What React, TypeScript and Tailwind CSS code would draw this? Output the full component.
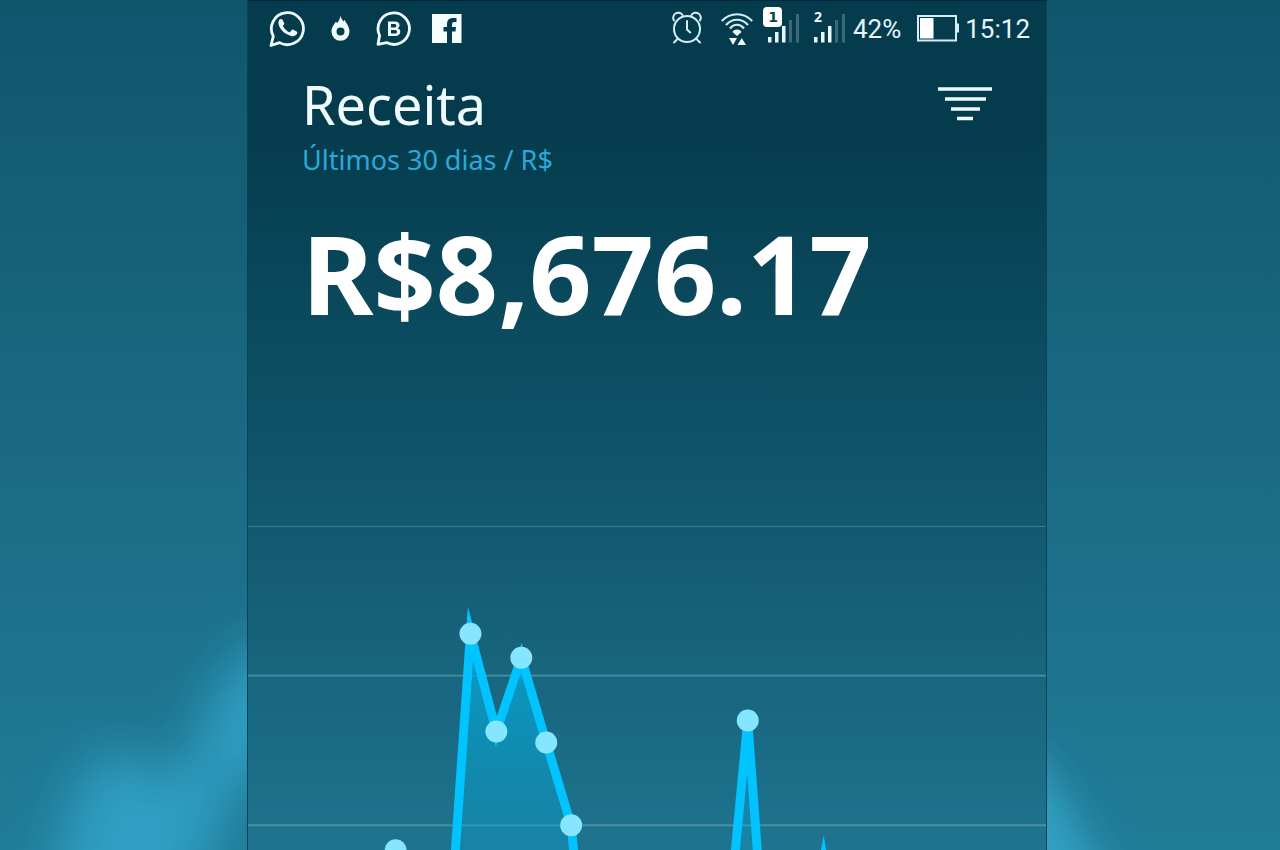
type Point = [number, number];

// Daily revenue, in chart units (800 wide, gridlines every 150)
const POINTS: Point[] = [
  [-3, 620],
  [22, 560],
  [48, 600],
  [73, 540],
  [98, 590],
  [123, 624],
  [148, 325],
  [173, 634],
  [198, 468],
  [223, 108],
  [249, 206],
  [274, 132],
  [299, 217],
  [324, 300],
  [350, 566],
  [375, 590],
  [400, 560],
  [425, 600],
  [450, 610],
  [476, 457],
  [501, 195],
  [526, 535],
  [551, 481],
  [577, 336],
  [602, 481],
  [627, 560],
  [803, 600],
];

function WhatsAppIcon() {
  return (
    <svg width="38" height="56" viewBox="0 0 38 56" aria-label="WhatsApp" fill="none">
      <path
        d="M2 44.500 4.300 35.200A16 16 0 1 1 10.600 41.600Z"
        stroke="#eefbff"
        strokeWidth="2.800"
        strokeLinejoin="round"
      />
      <path
        d="M10.500 18.500c1-.9 2.600-.8 3.200.4l1.500 3.400c.4.900-.8 2-1.400 2.700 1.600 3 3.900 5.100 6.800 6.400l2.200-2.400c.5-.5 1-.5 1.500-.2l3.300 1.700c1 .5.800 1.700.2 2.600-1.300 2-3.600 2.400-5.700 1.800-6.400-1.800-11-6-12.400-11.400-.5-2-.2-3.900.8-5Z"
        fill="#eefbff"
      />
    </svg>
  );
}

function FlameIcon() {
  return (
    <svg width="20" height="56" viewBox="0 0 20 56" aria-label="Hotmart" fill="none">
      <path
        fillRule="evenodd"
        d="M9.200 14.500c.3 2.500 2.600 4.200 3.300 6l1.200-1.700c1 3.200 4.800 6.200 4.800 12a9 9 0 0 1-18 0c0-4.600 2.600-7.200 4.400-10l1.300 1.200c1.800-2.200 3-4.600 3-7.500ZM9.500 26.500a4 4 0 1 0 0 8 4 4 0 0 0 0-8Z"
        fill="#eefbff"
      />
    </svg>
  );
}

function BusinessIcon() {
  return (
    <svg width="36" height="56" viewBox="0 0 36 56" aria-label="WhatsApp Business" fill="none">
      <path
        d="M2 43.300 3.600 34.500A15.700 15.700 0 1 1 10.500 41.600Z"
        stroke="#eefbff"
        strokeWidth="2.800"
        strokeLinejoin="round"
      />
      <path
        fillRule="evenodd"
        d="M12 20.500h6.800c3 0 4.700 1.300 4.700 3.700 0 1.500-.8 2.600-2.100 3.100 1.800.4 2.900 1.700 2.900 3.500 0 2.600-1.900 4.200-5.100 4.200h-7.200ZM15 23v3.500h3.200c1.500 0 2.200-.6 2.200-1.800 0-1.100-.7-1.700-2.200-1.700ZM15 28.900v3.700h3.600c1.600 0 2.400-.6 2.400-1.900 0-1.200-.8-1.800-2.400-1.800Z"
        fill="#eefbff"
      />
    </svg>
  );
}

function FacebookIcon() {
  return (
    <svg width="30" height="56" viewBox="0 0 30 56" aria-label="Facebook">
      <path
        fillRule="evenodd"
        d="M0 13H29.500V42H20V30.500H23.500L24 26H20V23.500C20 21.800 20.700 21 22.500 21H24.500V17H21C17 17 15 19.300 15 23V26H11.500V30.500H15V42H0Z"
        fill="#f4fdff"
      />
    </svg>
  );
}

function AlarmIcon() {
  return (
    <svg
      width="32"
      height="56"
      viewBox="0 0 32 56"
      aria-label="Alarme"
      fill="none"
      stroke="#d5eef5"
      strokeWidth="2"
      strokeLinecap="round"
    >
      <circle cx="16" cy="28" r="13" />
      <path d="M16 20v8.500l3.200 3M6.500 38 3 41.500M25.500 38l3.500 3.500" />
      <path d="M3 19.500A5 5 0 1 1 11.500 14M29 19.500A5 5 0 1 0 20.500 14" />
    </svg>
  );
}

function WifiIcon() {
  return (
    <svg width="32" height="56" viewBox="0 0 32 56" aria-label="Wi-Fi" fill="none">
      <g stroke="#d5eef5" strokeWidth="2.200">
        <path d="M.8 20C9.500 11 22.500 11 31.200 20" />
        <path d="M5 24C11 17 21 17 27 24" />
        <path d="M9 27.500C13 22.500 19 22.500 23 27.500" />
      </g>
      <path
        d="M11.500 31C13.500 27.800 18.500 27.800 20.500 31L16 35ZM8 37h8L12 44ZM16.500 44h8.500L20.700 37Z"
        fill="#eefbff"
      />
    </svg>
  );
}

function SignalBars({ x }: { x: number }) {
  return (
    <g>
      <path
        d={`M${x} 36h3.500v5.500h-3.500zM${x + 7} 31h3.500v10.500h-3.500zM${x + 14} 25h3.500v16.500h-3.500z`}
        fill="#e6f8fc"
      />
      <path d={`M${x + 21} 19h3v22.500h-3zM${x + 28} 13h3v28.500h-3z`} fill="#3b6877" />
    </g>
  );
}

function SignalOneIcon() {
  return (
    <svg width="37" height="56" viewBox="0 0 37 56" aria-label="Sinal do chip 1">
      <rect x="0" y="6" width="19" height="20" rx="4" fill="#ffffff" />
      <text
        x="10"
        y="21"
        textAnchor="middle"
        className="font-['DejaVu_Sans',sans-serif] text-[14px] font-bold"
        fill="#0b4252"
      >
        1
      </text>
      <SignalBars x={5} />
    </svg>
  );
}

function SignalTwoIcon() {
  return (
    <svg width="32" height="56" viewBox="0 0 32 56" aria-label="Sinal do chip 2">
      <text
        x="4"
        y="21"
        textAnchor="middle"
        className="font-['Noto_Sans',sans-serif] text-[14px] font-bold"
        fill="#e6f8fc"
      >
        2
      </text>
      <SignalBars x={0} />
    </svg>
  );
}

function BatteryIcon() {
  return (
    <svg width="42" height="56" viewBox="0 0 42 56" aria-label="Bateria">
      <rect x="1" y="15" width="38" height="24.500" fill="none" stroke="#d5eef5" strokeWidth="2" />
      <path d="M3 17h13.500v20.500H3z" fill="#ffffff" />
      <path d="M39.500 22.500H42v9h-2.500z" fill="#d5eef5" />
    </svg>
  );
}

function StatusBar() {
  return (
    <div className="flex h-14 items-center justify-between pr-4 pl-[21px] font-[Roboto,sans-serif] text-[26px] text-[#e6f6fa]">
      <div className="flex items-center">
        <WhatsAppIcon />
        <div className="ml-6">
          <FlameIcon />
        </div>
        <div className="ml-[25px]">
          <BusinessIcon />
        </div>
        <div className="ml-5">
          <FacebookIcon />
        </div>
      </div>
      <div className="flex items-center">
        <AlarmIcon />
        <div className="ml-[18px]">
          <WifiIcon />
        </div>
        <div className="ml-2.5">
          <SignalOneIcon />
        </div>
        <div className="ml-3.5">
          <SignalTwoIcon />
        </div>
        <span className="ml-[7px]">42%</span>
        <div className="mx-1.5 pl-2.5">
          <BatteryIcon />
        </div>
        <span>15:12</span>
      </div>
    </div>
  );
}

function RevenueChart() {
  const line = POINTS.map(([x, y]) => `${x},${y}`).join(" ");

  return (
    <svg
      viewBox="0 0 800 325"
      className="block w-full overflow-hidden"
      role="img"
      aria-label="Receita por dia"
    >
      <defs>
        <linearGradient id="area" gradientUnits="userSpaceOnUse" x1="0" y1="100" x2="0" y2="420">
          <stop offset="0" stopColor="#00afe0" stopOpacity="0.8" />
          <stop offset="1" stopColor="#0fa0cc" stopOpacity="0.1" />
        </linearGradient>
      </defs>
      <path d="M0 .5H800" stroke="#3f7b8f" strokeWidth="1" />
      <path d="M0 150H800M0 300H800" stroke="#4a8ea2" strokeWidth="2" />
      <polygon points={`-3,700 ${line} 803,700`} fill="url(#area)" />
      <polyline
        points={line}
        fill="none"
        stroke="#00c3ff"
        strokeWidth="9"
        strokeMiterlimit="10"
      />
      {POINTS.map(([x, y]) => (
        <circle key={x} cx={x} cy={y} r="11" fill="#86e5ff" />
      ))}
    </svg>
  );
}

export default function App() {
  return (
    <div className="grid min-h-screen grid-cols-[247fr_800fr_233fr] overflow-hidden bg-linear-to-b from-[#0f566d] via-[#1a6983] to-[#217c98] font-['Noto_Sans','Open_Sans',sans-serif]">
      <div className="flex items-end overflow-hidden">
        <svg viewBox="0 0 247 300" className="block w-full" aria-hidden="true">
          <defs>
            <filter id="glow-left" x="-50%" y="-50%" width="200%" height="200%">
              <feGaussianBlur stdDeviation="26" />
            </filter>
          </defs>
          <path
            d="M40 380 75 245Q105 180 135 215L185 225 225 125Q250 90 300 90V190L230 240 180 380Z"
            fill="#2f9fc2"
            filter="url(#glow-left)"
          />
        </svg>
      </div>

      <main className="flex flex-col border-x border-t border-[#0b4356] border-t-[#02293a] bg-linear-to-b from-[#053c4d] from-15% via-[#12586f] via-60% to-[#1e748f]">
        <StatusBar />

        <header className="flex items-start justify-between px-[54px] pt-[11px]">
          <div>
            <h1 className="text-[54px] leading-[72px] text-[#f0fbff]">Receita</h1>
            <p className="mt-0.5 text-[27px] leading-9 text-[#2aa9da]">Últimos 30 dias / R$</p>
          </div>
          <button type="button" aria-label="Filtrar" className="mt-[18px]">
            <svg width="54" height="36" viewBox="0 0 54 36" stroke="#eefbff" strokeWidth="3.500">
              <path d="M0 3H54M7 13H48M13 23H42M19 32.500H35" />
            </svg>
          </button>
        </header>

        <p className="px-[54px] pt-5 text-[109px] leading-[150px] font-bold text-white">
          R$8,676.17
        </p>

        <div className="mt-auto pt-10">
          <RevenueChart />
        </div>
      </main>

      <div className="flex items-end overflow-hidden">
        <svg viewBox="0 0 233 300" className="block w-full" aria-hidden="true">
          <defs>
            <filter id="glow-right" x="-100%" y="-50%" width="300%" height="200%">
              <feGaussianBlur stdDeviation="20" />
            </filter>
          </defs>
          <path d="M-60 180 0 220 70 350H-60Z" fill="#33a1c2" filter="url(#glow-right)" />
        </svg>
      </div>
    </div>
  );
}
